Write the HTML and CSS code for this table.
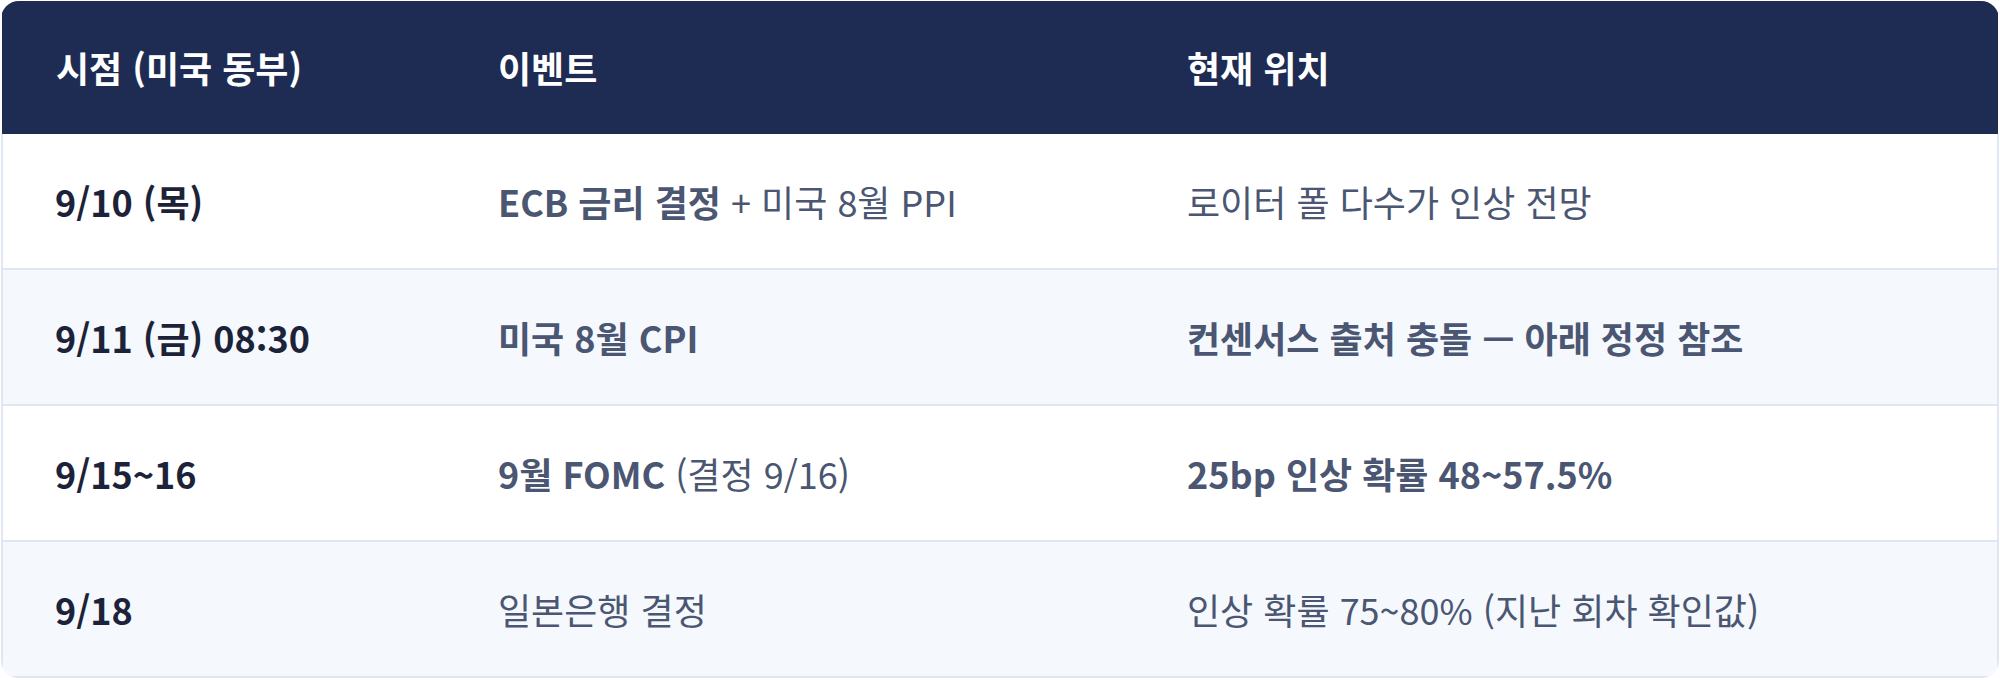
FILE: index.html
```html
<!DOCTYPE html>
<html lang="ko">
<head>
<meta charset="utf-8">
<link rel="stylesheet" href="styles.css">
</head>
<body>
<div class="wrap">
  <table class="schedule">
    <colgroup>
      <col class="c-time">
      <col class="c-event">
      <col class="c-status">
    </colgroup>
    <thead>
      <tr>
        <th>시점 (미국 동부)</th>
        <th>이벤트</th>
        <th>현재 위치</th>
      </tr>
    </thead>
    <tbody>
      <tr>
        <td class="time">9/10 (목)</td>
        <td><strong>ECB 금리 결정</strong> + 미국 8월 PPI</td>
        <td>로이터 폴 다수가 인상 전망</td>
      </tr>
      <tr class="alt">
        <td class="time">9/11 (금) 08:30</td>
        <td><strong>미국 8월 CPI</strong></td>
        <td><strong>컨센서스 출처 충돌 — 아래 정정 참조</strong></td>
      </tr>
      <tr>
        <td class="time">9/15~16</td>
        <td><strong>9월 FOMC</strong> (결정 9/16)</td>
        <td><strong>25bp 인상 확률 48~57.5%</strong></td>
      </tr>
      <tr class="alt">
        <td class="time">9/18</td>
        <td>일본은행 결정</td>
        <td>인상 확률 75~80% (지난 회차 확인값)</td>
      </tr>
    </tbody>
  </table>
</div>
</body>
</html>
```

FILE: styles.css
```css
html, body {
  margin: 0;
  padding: 0;
  background: #ffffff;
}
body {
  padding: 1px;
  font-family: "Noto Sans CJK KR", "Noto Sans", sans-serif;
}
.wrap {
  width: 1998px;
  border-radius: 18px;
  overflow: hidden;
}
.schedule {
  width: 100%;
  border-collapse: collapse;
  table-layout: fixed;
}
.c-time { width: 442px; }
.c-event { width: 689px; }
.c-status { width: auto; }

.schedule th {
  background: #1e2b53;
  color: #ffffff;
  font-weight: 700;
  font-size: 36px;
  line-height: 51px;
  text-align: left;
  padding: 41px 20px 41px 54px;
}
.schedule td {
  font-size: 36px;
  line-height: 51px;
  color: #4a5672;
  padding: 42px 20px 41px 54px;
  border-bottom: 2px solid #e1e7f2;
  white-space: nowrap;
}
.schedule td:first-child { border-left: 2px solid #e1e7f2; padding-left: 52px; }
.schedule td:last-child { border-right: 2px solid #e1e7f2; }
.schedule td.time {
  color: #1c2338;
  font-weight: 700;
}
.schedule strong { font-weight: 700; }
.schedule tr.alt td { background: #f5f8fd; }
```
